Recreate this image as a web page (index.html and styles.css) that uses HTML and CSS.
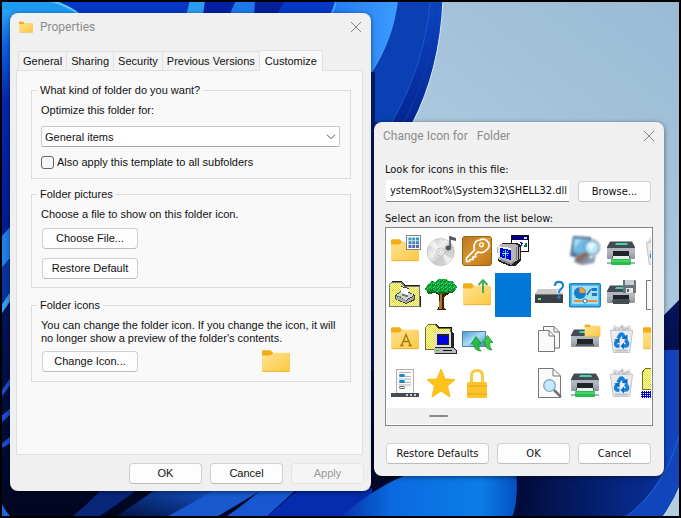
FILE: index.html
```html
<!DOCTYPE html>
<html lang="en">
<head>
<meta charset="utf-8">
<title>Folder Properties</title>
<link rel="stylesheet" href="styles.css">
</head>
<body>
<svg class="wallpaper" viewBox="0 0 681 518" preserveAspectRatio="none" aria-hidden="true">
  <defs>
    <linearGradient id="sky" x1="0" y1="1" x2="1" y2="0"><stop offset=".5" stop-color="#b4cfe2"/><stop offset="1" stop-color="#9abbd5"/></linearGradient>
    <linearGradient id="petal" x1="0" y1="0" x2="0" y2="1"><stop offset="0" stop-color="#0a45c4"/><stop offset=".3" stop-color="#031e86"/><stop offset="1" stop-color="#01061f"/></linearGradient>
    <linearGradient id="leftPetal" x1="0" y1="0" x2="0" y2="1"><stop offset="0" stop-color="#2aa5f5"/><stop offset=".15" stop-color="#0d62e8"/><stop offset=".4" stop-color="#0326b0"/><stop offset="1" stop-color="#021a90"/></linearGradient>
    <linearGradient id="glow" x1="0" y1="0" x2="1" y2="0"><stop offset="0" stop-color="#0739c8"/><stop offset=".75" stop-color="#1668ec"/><stop offset="1" stop-color="#3a9cff"/></linearGradient>
    <linearGradient id="bright" x1="0" y1="0" x2="1" y2="0"><stop offset="0" stop-color="#0535a8"/><stop offset=".3" stop-color="#0a6be0"/><stop offset=".8" stop-color="#0c7ce8"/><stop offset="1" stop-color="#0450c0"/></linearGradient>
    <linearGradient id="dark" x1="0" y1="0" x2="1" y2="0"><stop offset="0" stop-color="#010a38"/><stop offset="1" stop-color="#0935a6"/></linearGradient>
    <linearGradient id="ray" x1="0" y1="1" x2="1" y2="0"><stop offset="0" stop-color="#02103f"/><stop offset="1" stop-color="#1557cf"/></linearGradient>
  </defs>
  <rect width="681" height="518" fill="url(#sky)"/>
  <path d="M0 0H443Q440 70 412 124L385 300L540 440L679 300V482Q673 502 661 518H0Z" fill="url(#petal)"/>
  <path d="M0 0H397Q394 38 371 72V122H0Z" fill="url(#glow)"/>
  <path d="M397 0H430Q426 60 392 122H371V70Q392 38 397 0Z" fill="#0b3fb4"/>
  <path d="M397 0Q393 38 371 72" fill="none" stroke="#3e9cf8" stroke-width="2"/>
  <path d="M430 0Q426 62 391 124" fill="none" stroke="#2456c4"/>
  <path d="M438 0Q433 68 403 124" fill="none" stroke="#153b9f"/>
  <path d="M443 0Q440 70 412 124" fill="none" stroke="#d7e8f2"/>
  <path d="M0 0H336Q334 8 330 16H0Z" fill="#0638c6"/>
  <path d="M330 16Q335 8 336 0" fill="none" stroke="#36a8ff" stroke-width="2"/>
  <path d="M186 16L190 0H206L203 16Z" fill="#2a9df0"/>
  <path d="M203 16L205 0H236L229 16Z" fill="#041fa0"/>
  <path d="M229 16L236 0H255V16Z" fill="#1c79ed"/>
  <path d="M255 0H285L276 16H254Z" fill="#03209a"/>
  <path d="M0 0H52Q70 5 82 16H0Z" fill="#1d9af4"/>
  <path d="M48 0Q68 5 80 15" fill="none" stroke="#62c6ff" stroke-width="2"/>
  <path d="M0 10H11V230L0 238Z" fill="url(#leftPetal)"/>
  <path d="M0 238L11 226V257L0 270Z" fill="#1f7fe9"/>
  <path d="M0 270L11 258V292L0 305Z" fill="#07359e"/>
  <path d="M0 307L11 291V300L0 316Z" fill="#3d9af0"/>
  <path d="M0 393L11 377V384L0 399ZM0 417L11 408V414L0 424ZM0 445L11 436V443L0 449Z" fill="#1c4ecc"/>
  <path d="M0 498Q2 508 12 518H0Z" fill="#1d67df"/>
  <path d="M70 518Q92 501 102 488H140Q112 508 97 518Z" fill="#08277a"/>
  <path d="M114 518L158 488H222Q192 504 164 518Z" fill="url(#ray)"/>
  <path d="M164 518Q195 502 217 488H265Q235 506 215 518Z" fill="#1959ce"/>
  <path d="M224 518Q244 505 263 488H298L265 518Z" fill="#1857d1"/>
  <path d="M265 518L300 488H372V518Z" fill="#052cae"/>
  <path d="M371 72H375V370H371Z" fill="#041d6d"/>
  <path d="M340 518Q380 482 420 470H516Q519 500 512 518Z" fill="url(#bright)"/>
  <path d="M516 470H681V482Q673 502 661 518H512Q520 500 516 470Z" fill="url(#dark)"/>
  <path d="M664 470Q650 499 624 518H661Q673 502 681 482V350H664Z" fill="#1045bb"/>
  <path d="M679 435Q665 489 624 518" fill="none" stroke="#2565dd"/>
</svg>

<svg class="sprite" aria-hidden="true">
  <defs>
    <linearGradient id="gold" x1="0" y1="0" x2="1" y2="1"><stop offset="0" stop-color="#ffe391"/><stop offset="1" stop-color="#fbc742"/></linearGradient>
    <linearGradient id="amber" x1="0" y1="0" x2="1" y2="1"><stop offset="0" stop-color="#b9771f"/><stop offset=".5" stop-color="#d9952f"/><stop offset="1" stop-color="#bd7411"/></linearGradient>
    <linearGradient id="disc" x1="0" y1="0" x2="1" y2="1"><stop offset="0" stop-color="#c2c2c2"/><stop offset=".4" stop-color="#efefef"/><stop offset=".6" stop-color="#c9c9c9"/><stop offset="1" stop-color="#e4e4e4"/></linearGradient>
    <linearGradient id="steel" x1="0" y1="0" x2="0" y2="1"><stop offset="0" stop-color="#c5cad0"/><stop offset="1" stop-color="#8d949c"/></linearGradient>
    <linearGradient id="screen" x1="0" y1="0" x2="1" y2="1"><stop offset="0" stop-color="#4b95cb"/><stop offset=".5" stop-color="#a9dcf6"/><stop offset="1" stop-color="#4587ba"/></linearGradient>
    <pattern id="dither" width="2" height="2" patternUnits="userSpaceOnUse"><rect width="2" height="2" fill="#ffff9c"/><path d="M0 0h1v1h-1zM1 1h1v1h-1z" fill="#e2d94c"/></pattern>
    <pattern id="leaves" width="4" height="4" patternUnits="userSpaceOnUse"><rect width="4" height="4" fill="#12a33c"/><path d="M0 0h1v1h-1zM2 1h1v1h-1zM1 3h1v1h-1z" fill="#35e05c"/><path d="M3 2h1v1h-1zM1 1h1v1h-1z" fill="#047024"/></pattern>
    <pattern id="bluecheck" width="2" height="2" patternUnits="userSpaceOnUse"><rect width="2" height="2" fill="#0000c8"/><path d="M0 0h1v1h-1z" fill="#fff"/></pattern>
    <symbol id="folder" viewBox="0 0 32 32">
      <path d="M2 5.500Q2 4.300 3.200 4.300H10.500L13.500 7.300L11 10H2Z" fill="#f2ad16"/>
      <path d="M2 9.500H10.300L13.500 6.800H29Q30 6.800 30 8V25Q30 26 29 26H3Q2 26 2 25Z" fill="url(#gold)"/>
      <path d="M2.500 25.700H29.500" stroke="#e6a726" stroke-width=".7"/>
    </symbol>
    <symbol id="printer" viewBox="0 0 32 32">
      <path d="M5 6.500H27L30 12V15H2V12Z" fill="#464b53"/>
      <path d="M11 8H22L23 10H10Z" fill="#42d5aa"/>
      <path d="M2 13H30V23Q30 24 29 24H3Q2 24 2 23Z" fill="url(#steel)"/>
      <path d="M2 13H30V16H2Z" fill="#aeb6bf"/>
      <path d="M8 16H24V22H8Z" fill="#202327"/>
      <path d="M7 21H25V23H7Z" fill="#51565c"/>
    </symbol>
    <symbol id="greenprinter" viewBox="0 0 32 32">
      <use href="#printer" width="32" height="32"/>
      <path d="M8 21H24V25H8Z" fill="#e9eef0"/>
      <path d="M2 28H30" stroke="#a9b0b5" stroke-width="2"/>
      <rect x="6" y="24" width="20" height="6" rx="1" fill="#26bd4a"/><path d="M6.500 26H25.500" stroke="#6be884"/>
    </symbol>
    <symbol id="bin" viewBox="0 0 32 32">
      <path d="M6 9L9 2L14 4L17 1L20 4L25 2L27 8Z" fill="#dadcde"/>
      <path d="M9 5L12 8L17 3L18 7L24 5" fill="none" stroke="#aeb1b4"/>
      <path d="M5 7H28L25 29Q25 30 24 30H9Q8 30 8 29Z" fill="#e9ebed"/>
      <path d="M5 7.500H28M5.500 8L8.300 29.500H24.700L27.500 8" fill="none" stroke="#c3c7cb"/>
      <path d="M10 27.500H23" stroke="#bec2c6" stroke-width="2"/>
      <path d="M13 15.500L15 12Q16.500 10.500 18 12L19.500 14.500M20.500 17L22.500 20Q23 22.500 20.500 23H18.500M14.500 23H12Q9.800 22 11 19.500L12 18" fill="none" stroke="#1681d8" stroke-width="3.600"/>
      <path d="M16.500 15.500L22.500 11.500V17ZM19 19.500V26.500L15.500 23ZM9 16.500L14.500 15.500V20.500Z" fill="#0b6bc5"/>
    </symbol>
  </defs>
</svg>

<main class="desktop">
  <section class="window properties" aria-label="Properties">
    <header class="titlebar">
      <svg class="title-icon" viewBox="2 4 28 22"><use href="#folder" width="32" height="32"/></svg>
      <h1>Properties</h1>
      <button class="close" aria-label="Close"><svg viewBox="0 0 12 12"><path d="M1 1L11 11M11 1L1 11"/></svg></button>
    </header>
    <nav class="tabs" role="tablist">
      <button role="tab">General</button>
      <button role="tab">Sharing</button>
      <button role="tab">Security</button>
      <button role="tab">Previous Versions</button>
      <button role="tab" class="active" aria-selected="true">Customize</button>
    </nav>
    <div class="page" role="tabpanel">
      <fieldset class="kind">
        <legend>What kind of folder do you want?</legend>
        <label for="template">Optimize this folder for:</label>
        <div class="select-wrap">
          <select id="template"><option>General items</option></select>
          <svg class="chevron" viewBox="0 0 10 6"><path d="M1 .7L5 4.700L9 .7"/></svg>
        </div>
        <div class="check"><input type="checkbox" id="sub"><label for="sub">Also apply this template to all subfolders</label></div>
      </fieldset>
      <fieldset class="pictures">
        <legend>Folder pictures</legend>
        <p>Choose a file to show on this folder icon.</p>
        <button class="btn wide">Choose File...</button>
        <button class="btn wide">Restore Default</button>
      </fieldset>
      <fieldset class="icons-group">
        <legend>Folder icons</legend>
        <p>You can change the folder icon. If you change the icon, it will<br>no longer show a preview of the folder's contents.</p>
        <div class="change-row">
          <button class="btn wide">Change Icon...</button>
          <svg class="preview" viewBox="2 4 28 22"><use href="#folder" width="32" height="32"/></svg>
        </div>
      </fieldset>
    </div>
    <footer class="actions">
      <button class="btn">OK</button>
      <button class="btn">Cancel</button>
      <button class="btn" disabled>Apply</button>
    </footer>
  </section>

  <section class="window picker" aria-label="Change Icon">
    <header class="titlebar">
      <h2>Change Icon for <span class="name">Folder</span></h2>
      <button class="close" aria-label="Close"><svg viewBox="0 0 12 12"><path d="M1 1L11 11M11 1L1 11"/></svg></button>
    </header>
    <div class="picker-body">
      <label for="file">Look for icons in this file:</label>
      <div class="file-row">
        <input id="file" type="text" value="ystemRoot%\System32\SHELL32.dll">
        <button class="btn">Browse...</button>
      </div>
      <div class="list-label" id="list-label">Select an icon from the list below:</div>
      <div class="list">
        <div class="grid" role="listbox" aria-labelledby="list-label">
          <div class="cell"><svg viewBox="0 0 32 32"><use href="#folder" width="32" height="32"/><rect x="17.500" y=".5" width="14" height="14" fill="#fff" stroke="#868686"/><path d="M19.500 2.500h3v3h-3zM27 2.500h3v3h-3zM23.200 2.500h3v3h-3z" fill="#2b9fc6"/><path d="M19.500 6.300h3v3h-3zM23.200 6.300h3v3h-3zM27 6.300h3v3h-3z" fill="#3e80be"/><path d="M19.500 10h3v3h-3zM23.200 10h3v3h-3zM27 10h3v3h-3z" fill="#6167a6"/></svg></div>
          <div class="cell"><svg viewBox="0 0 32 32"><circle cx="15.700" cy="17" r="13.600" fill="url(#disc)" stroke="#b2b2b2" stroke-width=".6"/><path d="M15.700 17L4 10A14 14 0 0 1 9 5ZM15.700 17L27.500 24A14 14 0 0 1 22 29Z" fill="#fff" opacity=".6"/><circle cx="15.700" cy="17" r="4" fill="#eee" stroke="#c3c3c3"/><circle cx="15.700" cy="17" r="1.700" fill="#fff" stroke="#aaa" stroke-width=".6"/><path d="M25 1V13" stroke="#50585c" stroke-width="1.600"/><path d="M24.500 1L31 3V6L25 4.500Z" fill="#50585c"/><ellipse cx="23.300" cy="13" rx="2.800" ry="2.400" fill="#50585c"/></svg></div>
          <div class="cell"><svg viewBox="0 0 32 32"><rect x="1.500" y="1.500" width="29" height="29" rx="2.500" fill="url(#amber)" stroke="#9c6112"/><path d="M19 5A6 6 0 0 1 25 15.500Q21.500 19 17 17L14.500 19.500V22H12V24.500H9.500L8 26.500H5.500V23L13.500 15Q12 10 15 6.500Q17 5 19 5Z" fill="none" stroke="#fff" stroke-width="1.700"/><circle cx="20.500" cy="9.700" r="1.900" fill="none" stroke="#fff" stroke-width="1.300"/></svg></div>
          <div class="cell"><svg viewBox="0 0 32 32" shape-rendering="crispEdges"><path d="M14 0H32V17H14Z" fill="#111"/><path d="M15 1H31V5H15Z" fill="#00007d"/><path d="M27 2H30V4H27Z" fill="#ddd"/><path d="M15 5H31V16H15Z" fill="#fff"/><path d="M23 7h2v1h1v1h-1v2h-2v-1h1v-2h-1z" fill="#00f"/><path d="M28 8h2v4h-3v-2h1z" fill="#087d38"/><path d="M3 9L6 8H20L24 10V25L18 31H12L1 26V11Z" fill="#222"/><path d="M0 12L4 9H17L21 10V25L14 29L1 24Z" fill="#b5b5b5"/><path d="M1 11L14 13V15L3 13V22H1Z" fill="#eee"/><path d="M3 13L14 15V25L3 22Z" fill="#0000dc"/><path d="M8 15h1v8h-1zM5 18h7v1h-7zM6 16h1v1h-1zM10 16h1v1h-1zM6 20h1v1h-1zM10 20h1v1h-1z" fill="#59f3fc"/><path d="M4 26L14 30L17 27V25L14 28L4 24Z" fill="#888"/><path d="M19 12h1v13h-1z" fill="#777"/><path d="M22 12h1v12h-1z" fill="#aaa"/></svg></div>
          <div class="cell"></div>
          <div class="cell"><svg class="soft" viewBox="0 0 32 32"><path d="M4 1L22 2L24 20L9 23L1 21Z" fill="#536f90"/><path d="M5 3L20 4L21 18L4 18Z" fill="#6eb8e3"/><path d="M5 4L13 4L5 14Z" fill="#a3dcf4"/><path d="M8 18H20L21 27L13 30L5 27Z" fill="#7d8ba1"/><path d="M8 26L20 17" stroke="#936649" stroke-width="4"/><circle cx="23" cy="12.500" r="7.300" fill="#b7e7fa" stroke="#7293aa" stroke-width="1.500"/><path d="M19 10Q22 6 26 9L22 16Z" fill="#e8faff"/><path d="M19 25L27 20L25 28L14 30Z" fill="#8d9ab1"/></svg></div>
          <div class="cell"><svg viewBox="0 0 32 32"><use href="#greenprinter" width="32" height="32"/></svg></div>
          <div class="cell"><svg viewBox="0 0 32 32"><use href="#bin" width="32" height="32"/></svg></div>

          <div class="cell"><svg viewBox="0 0 32 32" shape-rendering="crispEdges"><path d="M1 28V5L3 2H13L16 6H31L32 28Z" fill="#222"/><path d="M0 27V6L3 3H12L15 7H30V27Z" fill="url(#dither)" stroke="#777"/><path d="M6 16L12 12V7L20 9V13L26 16V21L17 25L6 20Z" fill="#454545"/><path d="M7 16L14 12L25 16L17 21Z" fill="#d4d4d4"/><path d="M12 8L20 10L19 16L12 13Z" fill="#fff"/><path d="M7 17L17 21V24L7 20ZM17 22L25 17V20L17 24Z" fill="#aaa"/><path d="M14 15L20 17L17 18L12 16Z" fill="#777"/><path d="M9 17h3v1h-3z" fill="#0d3"/></svg></div>
          <div class="cell"><svg viewBox="0 0 32 32" shape-rendering="crispEdges"><path d="M14 16L4 11L6 10L15 14V9H18V14L27 10L29 11L19 18V28L21 31H12L14 27Z" fill="#3e1d05"/><path d="M15 14H17V30H14Z" fill="#ab742b"/><path d="M2 6L6 2L11 3L13 0H21L24 2L28 2L30 6L32 8L30 12L24 12L21 14L17 12L12 14L8 12L2 13L0 10Z" fill="url(#leaves)"/><path d="M2 12L8 11L12 13L18 12L22 13L30 11L28 14H22L15 15L11 14L3 15Z" fill="#057628"/></svg></div>
          <div class="cell"><svg viewBox="0 0 32 32"><use href="#folder" width="32" height="32"/><path d="M22 14V1M17.500 6L22 1.200L26.500 6" fill="none" stroke="#43ad56" stroke-width="2"/></svg></div>
          <div class="cell selected"></div>
          <div class="cell"><svg viewBox="0 0 32 32"><path d="M5 10H27L30 15V16H2V15Z" fill="#cacaca"/><path d="M2 15H30V24H2Z" fill="#3b4045"/><path d="M2 15.500H30" stroke="#777"/><rect x="5" y="19" width="3" height="2" fill="#57ed72"/><path d="M22 7Q22 2.800 26 2.800Q30 2.800 30 6.500Q30 9 27.500 10.500Q26 11.500 26 14" fill="none" stroke="#fff" stroke-width="4"/><path d="M22 7Q22 2.800 26 2.800Q30 2.800 30 6.500Q30 9 27.500 10.500Q26 11.500 26 14" fill="none" stroke="#1785cf" stroke-width="2.200"/><circle cx="26" cy="18" r="1.700" fill="#1785cf"/></svg></div>
          <div class="cell"><svg viewBox="0 0 32 32"><rect x=".7" y="4.700" width="30.600" height="23" rx="1" fill="#54b9ed" stroke="#1b83c5" stroke-width="1.400"/><path d="M3 7H29V25H3Z" fill="#9edff9"/><circle cx="11" cy="14" r="6" fill="#147fc8"/><path d="M10.500 13V8A6 6 0 0 1 16.500 14H11Z" fill="#fa9a29"/><path d="M18 16Q22 9 24 10H25" fill="none" stroke="#176ba9" stroke-width="1.500"/><path d="M23 9h5v3h-5zM23 14h5v3h-5z" fill="#187dc1"/><path d="M5 22H28" stroke="#f28e2d" stroke-width="2"/><circle cx="16" cy="22" r="2" fill="#fff" stroke="#1774b6"/></svg></div>
          <div class="cell"><svg viewBox="0 0 32 32"><use href="#printer" width="32" height="32"/><path d="M8 20H24V25H8Z" fill="#454b51"/><path d="M18 1H30L31 2V14H18Z" fill="#6c747b"/><path d="M20 1H29V6H20Z" fill="#c8ced1"/><path d="M21 9H28V14H21Z" fill="#e4e8e9"/><path d="M22 10H24V13H22Z" fill="#545c63"/></svg></div>
          <div class="cell"><svg viewBox="0 0 32 32"><path d="M5.500 1.500H20L27 8V30.500H5.500Z" fill="#fafafa" stroke="#777"/></svg></div>

          <div class="cell"><svg viewBox="0 0 32 32"><use href="#folder" width="32" height="32"/><path d="M12.500 22.500L17 11.500L21.500 22.500M13.800 18.500H20.200M11 22.500H14.500M19.500 22.500H23" fill="none" stroke="#a57411" stroke-width="1.300"/></svg></div>
          <div class="cell"><svg viewBox="0 0 32 32" shape-rendering="crispEdges"><path d="M1 27V5L5 1H11L14 4H27V27Z" fill="#111"/><path d="M0 26V5L4 1H10L13 5H25V26Z" fill="url(#dither)" stroke="#756f2a"/><path d="M10 9H27L29 11V25L32 28V31H10Z" fill="#222"/><path d="M10 9H26V24H10Z" fill="#ddd"/><path d="M12 11H24V22H12Z" fill="#222"/><path d="M13 13H23V21H13Z" fill="#0000dc"/><path d="M9 25H28L31 27V30H9Z" fill="#bbb"/><path d="M18 27H27V28H18Z" fill="#111"/><path d="M11 27h3v1h-3z" fill="#2ec64a"/></svg></div>
          <div class="cell"><svg viewBox="0 0 32 32"><rect x="1.500" y="8.500" width="23" height="15" fill="url(#screen)" stroke="#5a839e"/><path d="M20 28Q13 28 13 21H10L15 13.500L20.500 21H17.500Q17.500 26 20 28Z" fill="#28bd3c" stroke="#11882b" stroke-width=".7"/><path d="M22.500 12.500Q29.500 13 29.500 20H32L27 27L21.500 20H25Q25 15 22.500 12.500Z" fill="#3ac846" stroke="#11882b" stroke-width=".7" transform="rotate(180 26.750 19.750)"/></svg></div>
          <div class="cell"></div>
          <div class="cell"><svg viewBox="0 0 32 32"><path d="M10.500 3.500H21L26.500 9V25H10.500Z" fill="#f8f8f8" stroke="#777"/><path d="M21 3.500V9H26.500" fill="none" stroke="#777"/><path d="M5.500 7.500H16L21.500 13V28.500H5.500Z" fill="#fafafa" stroke="#777"/><path d="M16 7.500V13H21.500" fill="none" stroke="#777"/></svg></div>
          <div class="cell"><svg viewBox="0 0 32 32"><use href="#printer" width="32" height="32"/><use href="#folder" x="14.500" y="-1" width="18" height="18"/></svg></div>
          <div class="cell"><svg viewBox="0 0 32 32"><use href="#bin" width="32" height="32"/></svg></div>
          <div class="cell"><svg viewBox="0 0 32 32"><use href="#folder" width="32" height="32"/></svg></div>

          <div class="cell"><svg viewBox="0 0 32 32"><rect x="7.500" y="2.500" width="17" height="24" fill="#fafafa" stroke="#b0b0b0"/><path d="M10 5.500H22M16 9.500H22M16 15.500H22M10 12H22M10 18H22" stroke="#a5a5a5" stroke-width=".8"/><rect x="10" y="7" width="6" height="3" rx="1.500" fill="#1686ce"/><rect x="10" y="13" width="6" height="3" rx="1.500" fill="#1686ce"/><rect x="10.500" y="19.500" width="5" height="2" rx="1" fill="#fff" stroke="#333" stroke-width=".8"/><path d="M2 26H30V30H2Z" fill="#444a51"/><path d="M17 27h2v2h-2zM21 27h2v2h-2zM25 27h2v2h-2z" fill="#c6cbd0"/></svg></div>
          <div class="cell"><svg viewBox="0 0 32 32"><path d="M16 2L20 12L30 12.500L22.500 19L25 30L16 24L7 30L9.500 19L2 12.500L12 12Z" fill="#fcc419" stroke="#f9b918" stroke-linejoin="round"/></svg></div>
          <div class="cell"><svg viewBox="0 0 32 32"><path d="M10.500 17V9Q10.500 3.500 16 3.500Q21.500 3.500 21.500 9V17" fill="none" stroke="#f8c944" stroke-width="3"/><rect x="6" y="15" width="20" height="16" rx="1.500" fill="#fbc22a"/><path d="M6 19H26M6 27H26" stroke="#e6a51b"/></svg></div>
          <div class="cell"></div>
          <div class="cell"><svg viewBox="0 0 32 32"><path d="M5.500 1.500H20L27.500 9V30.500H5.500Z" fill="#fafafa" stroke="#777"/><path d="M20 1.500V9H27.500" fill="none" stroke="#777"/><path d="M21 23L28 30" stroke="#69747b" stroke-width="2.500"/><circle cx="16.500" cy="18.500" r="5.800" fill="#c7e9fb" stroke="#79a9c5" stroke-width="1.300"/></svg></div>
          <div class="cell"><svg viewBox="0 0 32 32"><use href="#greenprinter" width="32" height="32"/></svg></div>
          <div class="cell"><svg viewBox="0 0 32 32"><use href="#bin" width="32" height="32"/></svg></div>
          <div class="cell"><svg viewBox="0 0 32 32" shape-rendering="crispEdges"><path d="M1.500 22V5L5 1H13L16 4H30V22Z" fill="url(#dither)" stroke="#77721d"/><path d="M0 24H32V31H0Z" fill="url(#bluecheck)"/></svg></div>
        </div>
        <div class="scroll"><span class="thumb"></span></div>
      </div>
      <footer class="picker-actions">
        <button class="btn">Restore Defaults</button>
        <button class="btn">OK</button>
        <button class="btn">Cancel</button>
      </footer>
    </div>
  </section>
</main>
</body>
</html>
```
FILE: styles.css
```css
* { box-sizing: border-box; }
body {
  margin: 0;
  min-height: 100vh;
  overflow: hidden;
  color: #111;
  font: 11px/14px "Liberation Sans", Arial, sans-serif;
}
button, input, select { font: inherit; color: inherit; }
h1, h2, p { margin: 0; }

.wallpaper { position: absolute; inset: 0; width: 100%; height: 100%; }
.sprite { position: absolute; width: 0; height: 0; }
.desktop {
  position: relative;
  min-height: 100vh;
  border: 2px solid #000;
}

.window {
  position: absolute;
  background: #f0f0f0;
  border-radius: 8px;
  box-shadow: 0 1px 5px rgba(0, 0, 0, .5);
}
.properties { left: 8px; top: 11px; width: 361px; padding: 0 6px 7px; }
.picker {
  left: 372px; top: 120px; width: 290px;
  font-family: "DejaVu Sans Condensed", "DejaVu Sans", sans-serif;
}

.titlebar { display: flex; align-items: center; color: #8c8c8c; }
.titlebar h1, .titlebar h2 {
  flex: 1;
  font: 12px/16px Roboto, "Open Sans", sans-serif;
}
.name { margin-left: 6px; }
.properties .titlebar { height: 28px; margin: 0 3px 9px; }
.title-icon { width: 14px; height: 12px; margin-right: 7px; }
.close { display: flex; padding: 0; border: 0; background: none; }
.close svg { width: 12px; height: 12px; fill: none; stroke: #858585; }

.tabs { display: flex; align-items: flex-end; height: 20px; padding-left: 2px; }
.tabs button {
  height: 19px;
  padding: 0 4px;
  border: 1px solid #e0e0e0;
  border-width: 1px 1px 0 0;
  background: #f3f3f3;
  line-height: 18px;
  white-space: nowrap;
}
.tabs button:first-child { border-left-width: 1px; }
.tabs .active {
  position: relative;
  height: 21px;
  margin-bottom: -1px;
  padding: 0 5px;
  background: #f9f9f9;
}
.page {
  display: flex;
  flex-direction: column;
  min-height: 385px;
  margin-right: 2px;
  padding: 11px 11px 0 14px;
  border: 1px solid #e0e0e0;
  background: #f9f9f9;
}
fieldset {
  min-width: 0;
  margin: 0;
  padding: 0 10px 0 9px;
  border: 1px solid #dcdcdc;
}
legend { padding: 0 3px; margin-left: -4px; line-height: 16px; }
fieldset p, fieldset > label { display: block; line-height: 13px; }
.kind { height: 97px; }
.kind > label { margin-top: 6px; }
.select-wrap { position: relative; margin-top: 9px; }
select {
  display: block;
  width: 100%;
  height: 21px;
  padding: 0 3px;
  appearance: none;
  border: 1px solid #c9c9c9;
  border-bottom-color: #aaa;
  border-radius: 2px;
  background: #fff;
}
.chevron {
  position: absolute;
  right: 4px;
  top: 8px;
  width: 10px;
  height: 6px;
  fill: none;
  stroke: #555;
  pointer-events: none;
}
.check { display: flex; align-items: center; gap: 3px; margin-top: 8px; }
.check input {
  appearance: none;
  width: 13px;
  height: 13px;
  margin: 0;
  border: 1px solid #666;
  border-radius: 3px;
  background: #f5f5f5;
}
.pictures { height: 102px; margin-top: 7px; }
.pictures p { margin-top: 6px; }
.icons-group { height: 85px; margin-top: 9px; }
.icons-group p { margin-top: 6px; white-space: nowrap; }

.btn {
  min-width: 73px;
  height: 21px;
  padding: 0 4px;
  border: 1px solid #d0d0d0;
  border-bottom-color: #bbb;
  border-radius: 4px;
  background: #fdfdfd;
  line-height: 19px;
  white-space: nowrap;
}
.btn:disabled { color: #9a9a9a; background: #f5f5f5; border-color: #e4e4e4; }
.wide { display: block; width: 96px; margin-left: 1px; }
.pictures .wide { margin-top: 7px; }
.pictures .wide + .wide { margin-top: 9px; }
.change-row { display: flex; align-items: center; margin-top: 5px; gap: 124px; }
.preview { width: 28px; height: 22px; }
.actions { display: flex; justify-content: flex-end; gap: 8px; padding: 8px 1px 0 0; }

.picker .titlebar { height: 28px; padding: 0 9px 0 9px; }
.picker-body { padding: 11px 11px 12px; }
.picker-body > label, .list-label { display: block; line-height: 17px; }
.file-row { display: flex; align-items: center; gap: 9px; margin: 2px 2px 8px 1px; }
.file-row input {
  flex: 1;
  min-width: 0;
  height: 22px;
  padding: 0 0 0 4px;
  border: 0;
  border-bottom: 1px solid #868686;
  background: #fff;
}
.list { border: 1px solid #82868c; background: #fff; padding: 1px; }
.grid {
  display: grid;
  grid-template-columns: repeat(8, 36px);
  grid-auto-rows: 44px;
  overflow: hidden;
}
.cell { display: grid; place-items: center; }
.cell svg { width: 32px; height: 32px; }
.selected { background: #0078d7; }
.soft { filter: blur(1px); }
.scroll { height: 16px; margin-top: 3px; padding: 7px 42px; background: #f0f0f0; }
.thumb { display: block; width: 19px; height: 2px; background: #8b8b8b; border-radius: 1px; }
.picker-actions { display: flex; gap: 8px; margin: 17px 2px 0 1px; }
.picker-actions .btn:first-child { flex: 1; }
```
